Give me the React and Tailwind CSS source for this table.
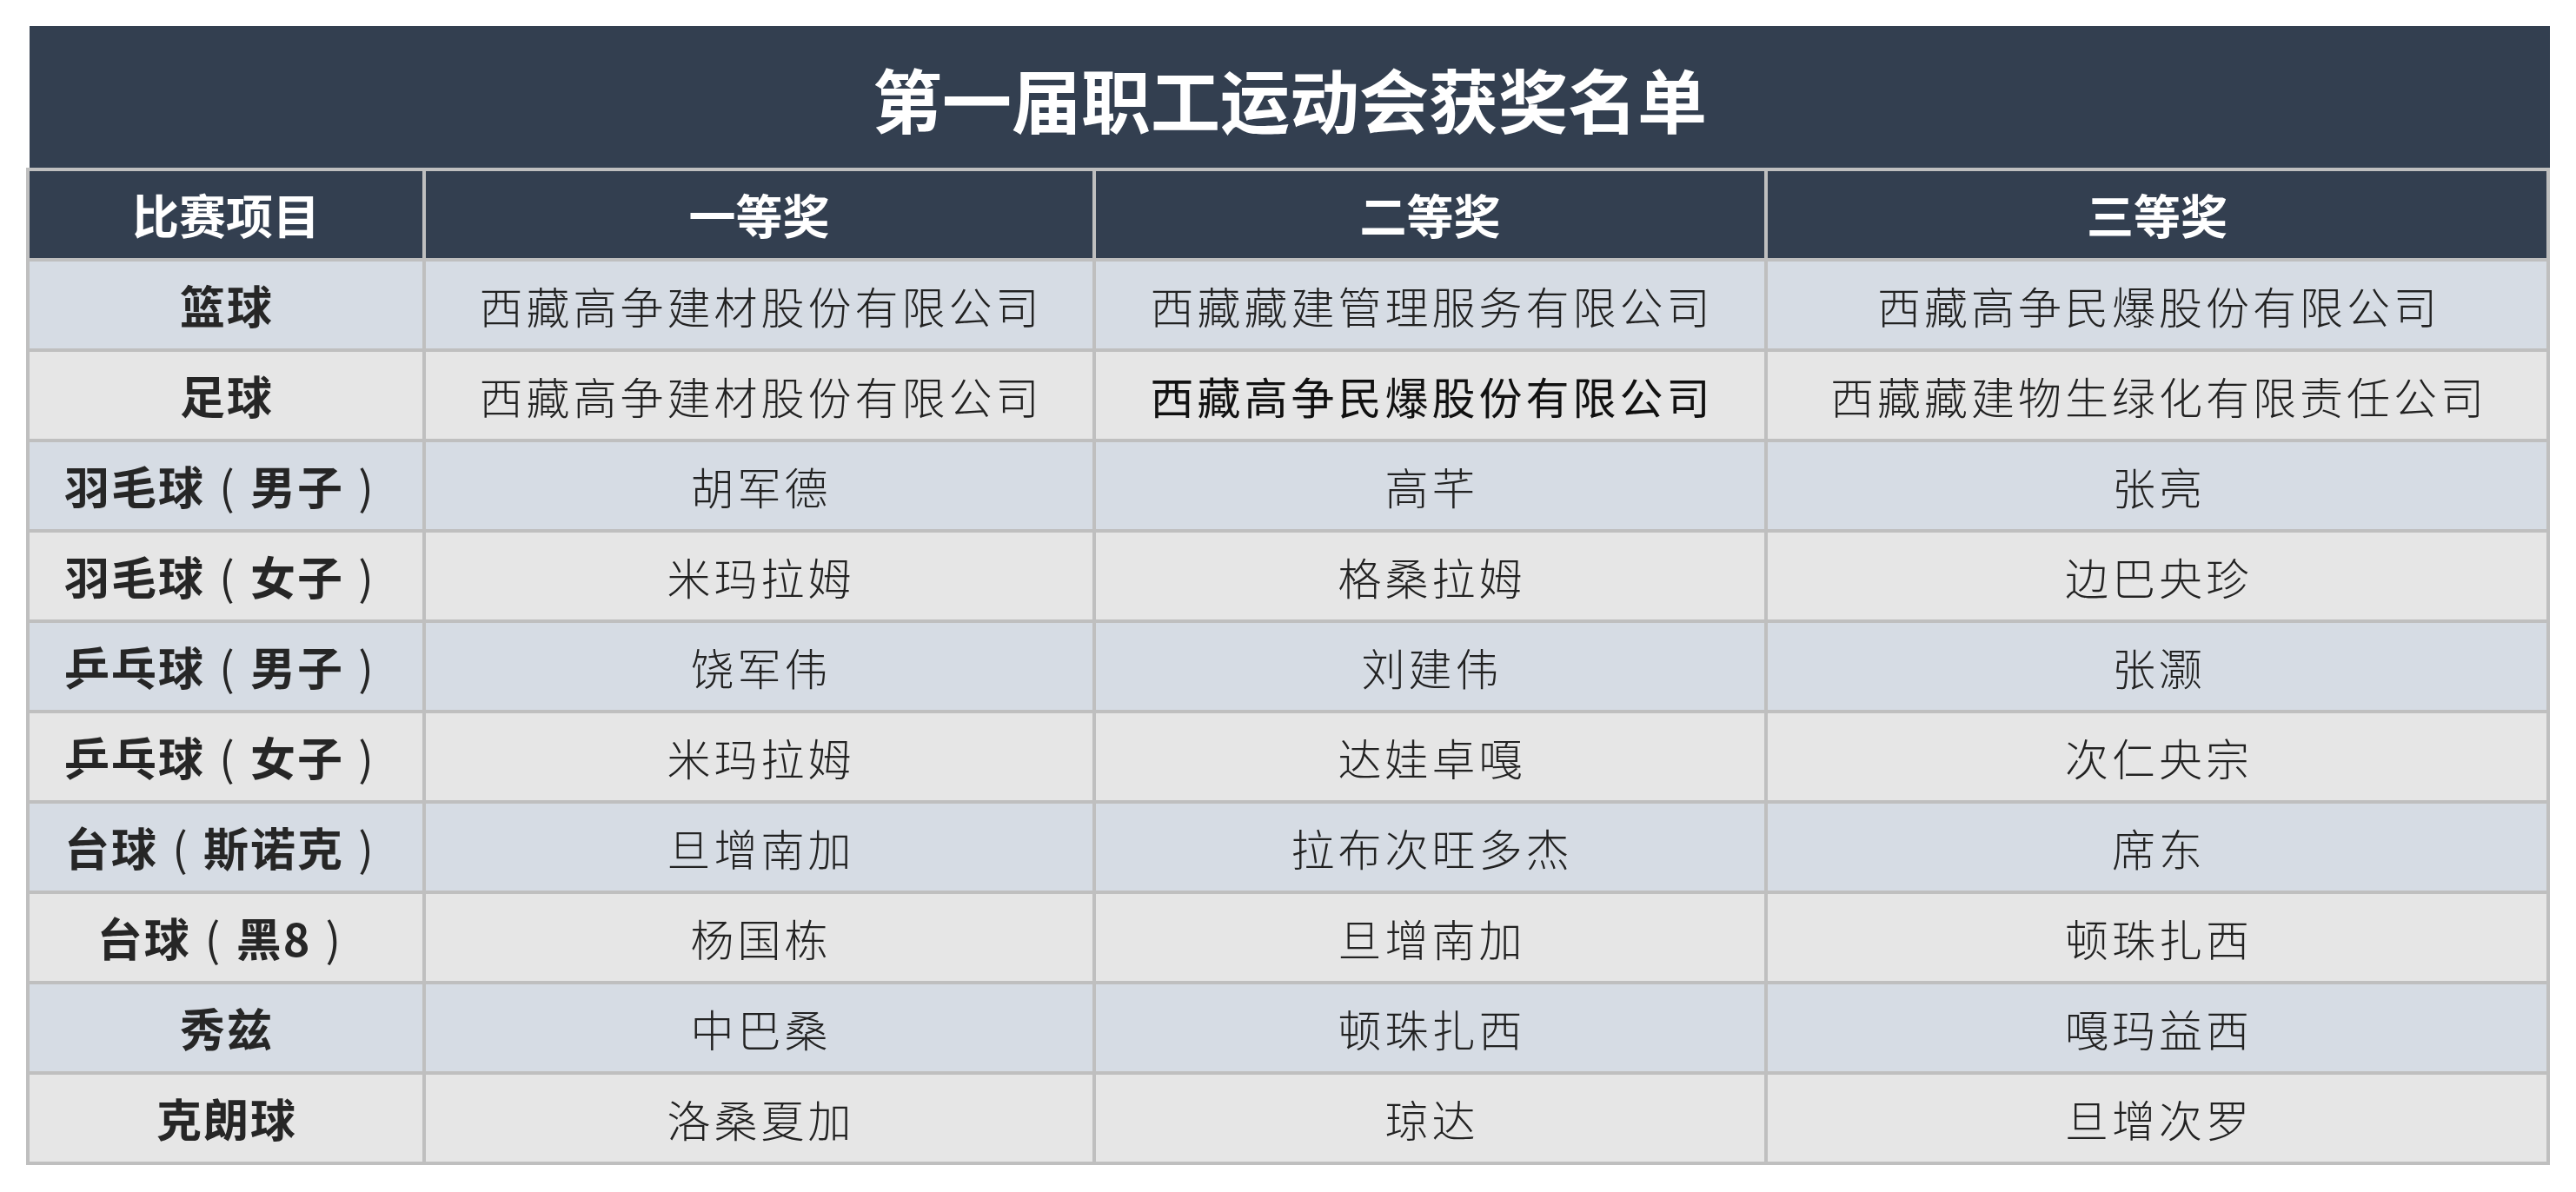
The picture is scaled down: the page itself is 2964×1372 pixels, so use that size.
import React from "react"

const rows = [
  ["篮球", "西藏高争建材股份有限公司", "西藏藏建管理服务有限公司", "西藏高争民爆股份有限公司"],
  ["足球", "西藏高争建材股份有限公司", "西藏高争民爆股份有限公司", "西藏藏建物生绿化有限责任公司"],
  ["羽毛球（男子）", "胡军德", "高芊", "张亮"],
  ["羽毛球（女子）", "米玛拉姆", "格桑拉姆", "边巴央珍"],
  ["乒乓球（男子）", "饶军伟", "刘建伟", "张灏"],
  ["乒乓球（女子）", "米玛拉姆", "达娃卓嘎", "次仁央宗"],
  ["台球（斯诺克）", "旦增南加", "拉布次旺多杰", "席东"],
  ["台球（黑8）", "杨国栋", "旦增南加", "顿珠扎西"],
  ["秀兹", "中巴桑", "顿珠扎西", "嘎玛益西"],
  ["克朗球", "洛桑夏加", "琼达", "旦增次罗"],
]

const headers = ["比赛项目", "一等奖", "二等奖", "三等奖"]

// full-width brackets drawn centred in their own em box, like the sheet's font
const Event = ({ name }) => {
  const parts = name.split(/([（）])/)
  return (
    <span>
      {parts.map((p, k) =>
        p === "（" || p === "）" ? (
          <span key={k} className="inline-block w-[1em] text-center font-normal">
            {p === "（" ? "(" : ")"}
          </span>
        ) : (
          <span key={k}>{p}</span>
        )
      )}
    </span>
  )
}

const App = () => {
  return (
    <div className="w-[2964px] h-[1372px] bg-white pt-[30px] pl-[30px] font-['Noto_Sans_CJK_SC',sans-serif]">
      <div className="w-[2904px]">
        <div className="ml-[4px] h-[163px] bg-[#333f50] flex items-center justify-center">
          <h1 className="text-white text-[80px] font-bold leading-none">第一届职工运动会获奖名单</h1>
        </div>
        <div className="grid grid-cols-[452px_767px_769px_896px] auto-rows-[100px] gap-[4px] p-[4px] bg-[#bfbfbf]">
          {headers.map((h) => (
            <div
              key={h}
              className="bg-[#333f50] flex items-center justify-center text-white text-[54px] font-bold leading-none"
            >
              {h}
            </div>
          ))}
          {rows.map((row, i) => {
            const bg = i % 2 === 0 ? "bg-[#d6dce4]" : "bg-[#e6e6e6]"
            return row.map((cell, j) => {
              let text = "text-[50px] font-light tracking-[4px] pl-[4px] text-[#222222]"
              if (j === 0) text = "text-[52px] font-semibold tracking-[2px] pl-[2px] text-[#262626]"
              else if (i === 1 && j === 2) text = "text-[50px] font-normal tracking-[4px] pl-[4px] text-[#111111]"
              return (
                <div
                  key={i + "-" + j}
                  className={bg + " flex items-center justify-center leading-none " + text}
                >
                  {j === 0 ? <Event name={cell} /> : cell}
                </div>
              )
            })
          })}
        </div>
      </div>
    </div>
  )
}

export default App
